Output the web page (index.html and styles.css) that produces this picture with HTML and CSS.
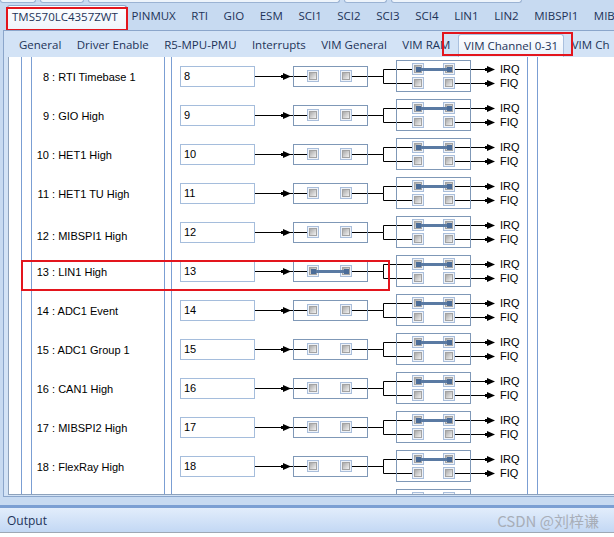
FILE: index.html
```html
<!DOCTYPE html>
<html>
<head>
    <title>VIM Channel 0-31</title>
    <meta charset="utf-8">
    <link rel="stylesheet" href="styles.css">
</head>
<body>
    <svg class="defs" width="0" height="0">
        <defs>
            <linearGradient id="boxfill" x1="0" y1="0" x2="1" y2="1">
                <stop offset="0" stop-color="#a4a4a4"/>
                <stop offset="1" stop-color="#f8f8f8"/>
            </linearGradient>
            <g id="cb">
                <rect x="0.5" y="0.5" width="11" height="11" fill="#eef2f8" stroke="#a9bedb"/>
                <rect x="2.5" y="2.5" width="7" height="7" fill="url(#boxfill)" stroke="#a3a3a3"/>
            </g>
            <g id="arrow">
                <rect x="0" y="-1.5" width="3" height="3"/>
                <polygon points="2,-3.5 10,0 2,3.5"/>
            </g>
            <!-- one channel: input arrow, enable box, IRQ/FIQ select box -->
            <g id="route">
                <g fill="none" stroke="#000">
                    <path d="M0 19.5H52M97 19.5H128.5V12.5H157M128.5 19.5V26.5H157M200 12.5H232M200 26.5H232"/>
                </g>
                <g fill="none" stroke="#7f98b7">
                    <rect x="38.5" y="9.5" width="74" height="20"/>
                    <rect x="141.5" y="3.5" width="74" height="31"/>
                </g>
                <use href="#arrow" x="26" y="19.5"/>
                <use href="#arrow" x="230" y="12.5"/>
                <use href="#arrow" x="230" y="26.5"/>
                <use href="#cb" x="52" y="13"/>
                <use href="#cb" x="85" y="13"/>
                <use href="#cb" x="157" y="6"/>
                <use href="#cb" x="188" y="6"/>
                <use href="#cb" x="157" y="20"/>
                <use href="#cb" x="188" y="20"/>
                <path d="M163 12.5H194" stroke="#5a7aa3" stroke-width="3"/>
                <rect x="161" y="10" width="5" height="5" fill="#4b6c98"/>
                <rect x="192" y="10" width="5" height="5" fill="#4b6c98"/>
            </g>
            <g id="enabled">
                <path d="M58 19.5H91" stroke="#5a7aa3" stroke-width="3"/>
                <rect x="56" y="17" width="5" height="5" fill="#4b6c98"/>
                <rect x="89" y="17" width="5" height="5" fill="#4b6c98"/>
            </g>
        </defs>
    </svg>

    <div class="remnant"><span></span><span></span><span></span><span></span><span></span></div>

    <div class="tabs-main">
        <div class="tab active mark">TMS570LC4357ZWT</div>
        <div class="tab">PINMUX</div>
        <div class="tab">RTI</div>
        <div class="tab">GIO</div>
        <div class="tab">ESM</div>
        <div class="tab">SCI1</div>
        <div class="tab">SCI2</div>
        <div class="tab">SCI3</div>
        <div class="tab">SCI4</div>
        <div class="tab">LIN1</div>
        <div class="tab">LIN2</div>
        <div class="tab">MIBSPI1</div>
        <div class="tab">MIB</div>
    </div>

    <div class="panel">
        <div class="tabs-sub">
            <div class="tab">General</div>
            <div class="tab">Driver Enable</div>
            <div class="tab">R5-MPU-PMU</div>
            <div class="tab">Interrupts</div>
            <div class="tab">VIM General</div>
            <div class="tab">VIM RAM</div>
            <div class="tab active mark">VIM Channel 0-31</div>
            <div class="tab">VIM Ch</div>
        </div>

        <div class="content">
            <div class="row">
                <div class="c-a"></div><div class="c-b"></div>
                <div class="c-label"><span class="num">8</span>&nbsp;: RTI Timebase 1</div>
                <div class="c-sep"></div>
                <div class="c-diag">
                    <div class="field">8</div>
                    <svg class="route" width="244" height="39"><use href="#route"/></svg>
                    <div class="irq">IRQ<br>FIQ</div>
                </div>
                <div class="c-r"></div><div class="c-rest"></div>
            </div>
            <div class="row">
                <div class="c-a"></div><div class="c-b"></div>
                <div class="c-label"><span class="num">9</span>&nbsp;: GIO High</div>
                <div class="c-sep"></div>
                <div class="c-diag">
                    <div class="field">9</div>
                    <svg class="route" width="244" height="39"><use href="#route"/></svg>
                    <div class="irq">IRQ<br>FIQ</div>
                </div>
                <div class="c-r"></div><div class="c-rest"></div>
            </div>
            <div class="row">
                <div class="c-a"></div><div class="c-b"></div>
                <div class="c-label"><span class="num">10</span>&nbsp;: HET1 High</div>
                <div class="c-sep"></div>
                <div class="c-diag">
                    <div class="field">10</div>
                    <svg class="route" width="244" height="39"><use href="#route"/></svg>
                    <div class="irq">IRQ<br>FIQ</div>
                </div>
                <div class="c-r"></div><div class="c-rest"></div>
            </div>
            <div class="row">
                <div class="c-a"></div><div class="c-b"></div>
                <div class="c-label"><span class="num">11</span>&nbsp;: HET1 TU High</div>
                <div class="c-sep"></div>
                <div class="c-diag">
                    <div class="field">11</div>
                    <svg class="route" width="244" height="39"><use href="#route"/></svg>
                    <div class="irq">IRQ<br>FIQ</div>
                </div>
                <div class="c-r"></div><div class="c-rest"></div>
            </div>
            <div class="row">
                <div class="c-a"></div><div class="c-b"></div>
                <div class="c-label low"><span class="num">12</span>&nbsp;: MIBSPI1 High</div>
                <div class="c-sep"></div>
                <div class="c-diag">
                    <div class="field">12</div>
                    <svg class="route" width="244" height="39"><use href="#route"/></svg>
                    <div class="irq">IRQ<br>FIQ</div>
                </div>
                <div class="c-r"></div><div class="c-rest"></div>
            </div>
            <div class="row mark">
                <div class="c-a"></div><div class="c-b"></div>
                <div class="c-label"><span class="num">13</span>&nbsp;: LIN1 High</div>
                <div class="c-sep"></div>
                <div class="c-diag">
                    <div class="field">13</div>
                    <svg class="route" width="244" height="39"><use href="#route"/><use href="#enabled"/></svg>
                    <div class="irq">IRQ<br>FIQ</div>
                </div>
                <div class="c-r"></div><div class="c-rest"></div>
            </div>
            <div class="row">
                <div class="c-a"></div><div class="c-b"></div>
                <div class="c-label"><span class="num">14</span>&nbsp;: ADC1 Event</div>
                <div class="c-sep"></div>
                <div class="c-diag">
                    <div class="field">14</div>
                    <svg class="route" width="244" height="39"><use href="#route"/></svg>
                    <div class="irq">IRQ<br>FIQ</div>
                </div>
                <div class="c-r"></div><div class="c-rest"></div>
            </div>
            <div class="row">
                <div class="c-a"></div><div class="c-b"></div>
                <div class="c-label"><span class="num">15</span>&nbsp;: ADC1 Group 1</div>
                <div class="c-sep"></div>
                <div class="c-diag">
                    <div class="field">15</div>
                    <svg class="route" width="244" height="39"><use href="#route"/></svg>
                    <div class="irq">IRQ<br>FIQ</div>
                </div>
                <div class="c-r"></div><div class="c-rest"></div>
            </div>
            <div class="row">
                <div class="c-a"></div><div class="c-b"></div>
                <div class="c-label"><span class="num">16</span>&nbsp;: CAN1 High</div>
                <div class="c-sep"></div>
                <div class="c-diag">
                    <div class="field">16</div>
                    <svg class="route" width="244" height="39"><use href="#route"/></svg>
                    <div class="irq">IRQ<br>FIQ</div>
                </div>
                <div class="c-r"></div><div class="c-rest"></div>
            </div>
            <div class="row">
                <div class="c-a"></div><div class="c-b"></div>
                <div class="c-label"><span class="num">17</span>&nbsp;: MIBSPI2 High</div>
                <div class="c-sep"></div>
                <div class="c-diag">
                    <div class="field">17</div>
                    <svg class="route" width="244" height="39"><use href="#route"/></svg>
                    <div class="irq">IRQ<br>FIQ</div>
                </div>
                <div class="c-r"></div><div class="c-rest"></div>
            </div>
            <div class="row">
                <div class="c-a"></div><div class="c-b"></div>
                <div class="c-label"><span class="num">18</span>&nbsp;: FlexRay High</div>
                <div class="c-sep"></div>
                <div class="c-diag">
                    <div class="field">18</div>
                    <svg class="route" width="244" height="39"><use href="#route"/></svg>
                    <div class="irq">IRQ<br>FIQ</div>
                </div>
                <div class="c-r"></div><div class="c-rest"></div>
            </div>
            <div class="row">
                <div class="c-a"></div><div class="c-b"></div>
                <div class="c-label"></div>
                <div class="c-sep"></div>
                <div class="c-diag">
                    <div class="field empty"></div>
                    <svg class="route" width="244" height="39"><use href="#route"/></svg>
                </div>
                <div class="c-r"></div><div class="c-rest"></div>
            </div>
        </div>
    </div>

    <div class="band"></div>
    <div class="output">
        <span class="title">Output</span>
        <span class="watermark">CSDN @刘梓谦</span>
    </div>
    <div class="foot"></div>
</body>
</html>
```

FILE: styles.css
```css
* {
    box-sizing: border-box;
}
body {
    margin: 0;
    width: 614px;
    height: 537px;
    overflow: hidden;
    background: #c7daf1;
    font-family: "Open Sans", "Noto Sans", sans-serif;
    font-size: 11.5px;
    color: #1d3358;
}
.defs {
    display: block;
}

/* bottoms of the tab row above, scrolled out of view */
.remnant {
    display: flex;
    height: 3px;
}
.remnant span {
    height: 3px;
    margin-right: 4px;
    background: #eef4fb;
    border: 1px solid #9bb3d3;
    border-top: 0;
    border-radius: 0 0 3px 3px;
}
.remnant span:nth-child(1) { width: 36px; }
.remnant span:nth-child(2) { width: 44px; }
.remnant span:nth-child(3) { width: 252px; }
.remnant span:nth-child(4) { width: 43px; }
.remnant span:nth-child(5) { width: 131px; }

/* tab strips */
.tabs-main,
.tabs-sub {
    display: flex;
    align-items: flex-end;
    overflow: hidden;
    white-space: nowrap;
}
.tabs-main {
    height: 27px;
    padding-left: 7px;
}
.tabs-main .tab {
    padding: 0 7.8px;
    height: 25px;
    line-height: 21px;
}
.tabs-main .tab.active {
    height: 26px;
    margin-bottom: -1px;
    margin-right: -3px;
    padding: 0 8px 0 4px;
    background: linear-gradient(#fdfeff, #eef4fb);
    border: 1px solid #8ba6cb;
    border-bottom: 0;
    border-radius: 3px 3px 0 0;
    z-index: 1;
}
.tabs-sub {
    height: 26px;
    padding-left: 3px;
}
.tabs-sub .tab {
    padding: 0 7.7px;
    height: 23px;
    line-height: 22px;
}
.tabs-sub .tab:first-child {
    padding-left: 8px;
}
.tabs-sub .tab.active {
    padding: 0 5px;
    background: linear-gradient(#fdfeff, #eaf1fa);
    border: 1px solid #a9c0df;
    border-bottom: 0;
    border-radius: 3px 3px 0 0;
}

/* red annotation frames */
.mark {
    position: relative;
}
.mark::after {
    content: "";
    position: absolute;
    border: 2px solid #e3151d;
    pointer-events: none;
}
.tabs-main .mark::after {
    left: -2px;
    right: -2px;
    top: 1px;
    bottom: 0;
}
.tabs-sub .mark::after {
    left: -17px;
    right: -10px;
    top: -3px;
    bottom: 1px;
}
.row.mark::after {
    left: 12px;
    top: 8px;
    width: 365px;
    height: 27px;
}

.panel {
    margin-left: 3px;
    padding: 0 0 1px 4px;
    background: #d3e3f6;
    border: 1px solid #8ba6cb;
    border-right: 0;
}
.content {
    height: 438px;
    overflow: hidden;
    background: #fff;
    border-left: 1px solid #8da2bc;
    border-bottom: 1px solid #8da2bc;
    font-family: "Liberation Sans", Arial, sans-serif;
    font-size: 11px;
    color: #000;
}

/* channel rows */
.row {
    display: flex;
    height: 39px;
}
.row > div {
    flex-shrink: 0;
}
.c-a { width: 12px; }
.c-b,
.c-label,
.c-sep,
.c-diag,
.c-r,
.c-rest {
    border-left: 1px solid #7b9ed3;
}
.c-b { width: 10px; }
.c-label {
    width: 133px;
    display: flex;
    align-items: center;
    padding-left: 4px;
}
.c-label.low {
    padding-top: 7px;
}
.num {
    display: inline-block;
    width: 13px;
    text-align: right;
}
.c-sep { width: 7px; }
.c-diag {
    width: 356px;
    display: flex;
    align-items: flex-start;
}
.c-r { width: 10px; }
.c-rest { flex: 1; }

.field {
    width: 75px;
    height: 21px;
    margin: 9px 0 0 8px;
    padding-left: 3px;
    border: 1px solid #a5bddc;
    line-height: 19px;
}
.route {
    display: block;
}
.irq {
    margin-left: 1px;
    padding-top: 5px;
    line-height: 14px;
}

/* output pane */
.band {
    height: 3px;
    margin-top: 8px;
    background: #7b9fd3;
}
.output {
    height: 25px;
    display: flex;
    align-items: center;
    justify-content: space-between;
    padding: 0 15px 0 7px;
    background: linear-gradient(#e2edfb, #c3d8f4);
    border-bottom: 1px solid #9ea8b5;
}
.output .title {
    font-size: 12px;
}
.watermark {
    font-family: "Noto Sans CJK SC", sans-serif;
    font-size: 15px;
    color: #a8aeb8;
}
.foot {
    height: 4px;
    background: #fff;
}
```
